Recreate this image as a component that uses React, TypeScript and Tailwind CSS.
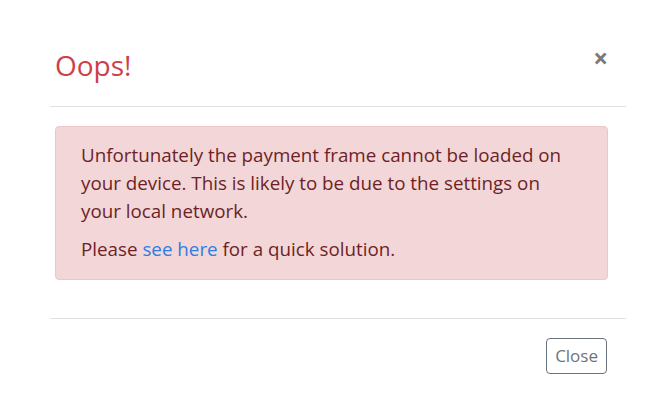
import React from "react";

export default function App() {
  return (
    <div
      className="w-[670px] h-[420px] bg-white"
      style={{ fontFamily: '"Open Sans", "Noto Sans", sans-serif' }}
    >
      <div className="pt-[40px] ml-[50px] w-[576px]">
        <div className="flex items-start justify-between border-b border-[#e2e2e4] pb-[20px] pl-[5px] pr-[18px]">
          <h1 className="text-[28px] leading-[40px] text-[#cf3f48] mt-[5px] mb-[1px]">Oops!</h1>
          <button className="text-[26px] leading-none font-bold text-[#7a7a7a] mt-[5px]">×</button>
        </div>
        <div className="pl-[5px] pr-[18px] pt-[19px] pb-[38px] border-b border-[#e2e2e4]">
          <div className="bg-[#f2d6d8] border border-[#efc5c9] rounded-[4px] pl-[25px] pr-4 pt-[14px] pb-[16px] text-[#6e1f26] text-[18.8px] leading-[28px]">
            <p className="w-[495px]">
              Unfortunately the payment frame cannot be loaded on your device. This is likely to be due to
              the settings on your local network.
            </p>
            <p className="mt-[10px]">
              Please <a className="text-[#2f7de1]">see here</a> for a quick solution.
            </p>
          </div>
        </div>
        <div className="flex justify-end pt-[19px] pr-[19px]">
          <button className="border border-[#6c757d] rounded-[4px] px-[8px] h-[36px] text-[17px] text-[#6c757d]">
            Close
          </button>
        </div>
      </div>
    </div>
  );
}
